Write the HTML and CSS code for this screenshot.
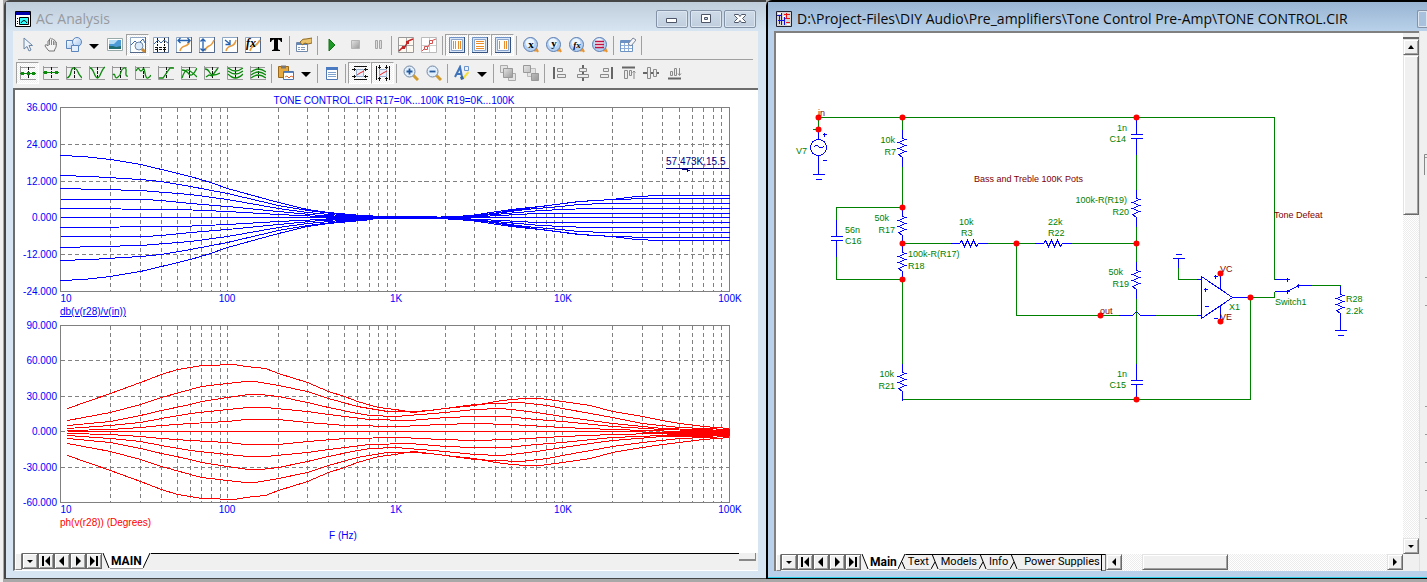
FILE: index.html
```html
<!DOCTYPE html>
<html lang="en">
<head>
<meta charset="utf-8">
<title>AC Analysis</title>
<link rel="stylesheet" href="styles.css">
</head>
<body>
<svg class="sprite" aria-hidden="true">
  <defs>
    <linearGradient id="gb" x1="0" y1="0" x2="1" y2="1"><stop offset="0" stop-color="#fff"/><stop offset="1" stop-color="#9fc3ee"/></linearGradient>
    <linearGradient id="gg" x1="0" y1="0" x2="1" y2="1"><stop offset="0" stop-color="#e4e4e4"/><stop offset="1" stop-color="#999"/></linearGradient>
    <symbol id="i-cursor" viewBox="0 0 16 16"><path d="M4 1v11l3-2.500 2 4.500 2-1-2-4.500h3.500z" fill="#eef4fb" stroke="#6b84a5"/></symbol>
    <symbol id="i-hand" viewBox="0 0 16 16"><path d="M5 13 2 9q0-2 2-1l1 1V4q1-1 1.500 0V2q1-1.500 2 0 1-1 2 1 1.500-.500 1.500 1.500 1.500 0 1.500 2 0 4-2 6.500v1H6z" fill="#f4f4f4" stroke="#777"/><path d="M6.500 4v4M8.500 3v5M10.500 4v4M12 5v3" stroke="#888" fill="none"/></symbol>
    <symbol id="i-shapes" viewBox="0 0 16 16"><path d="M.5 3.500h9v8h-9z" fill="url(#gb)" stroke="#5b85bd"/><circle cx="11" cy="5" r="4.500" fill="url(#gb)" stroke="#5b85bd"/><path d="M5.500 8.500h7v6h-7z" fill="#e4effb" stroke="#5b85bd"/></symbol>
    <symbol id="i-drop" viewBox="0 0 10 16"><path d="M0 7h10L5 12z" fill="#000"/></symbol>
    <symbol id="i-picture" viewBox="0 0 16 16"><path d="M.5 1.500h15v12H.5z" fill="#fff" stroke="#9aa"/><path d="M2 3h12v9H2z" fill="#4d9bd6"/><path d="M2 3h9l-4 4H2z" fill="#b4dcf4"/><path d="M2 12V9l4 0 3 1 5-1v3z" fill="#1f6d70"/></symbol>
    <symbol id="i-box" viewBox="0 0 16 16"><path d="M.5.5h15v15H.5z" fill="#fdfefe" stroke="#8fa6c5"/><path d="M0 15.500h15.500V0" fill="none" stroke="#54688a"/></symbol>
    <symbol id="i-scope" viewBox="0 0 16 16"><use href="#i-box"/><path d="M1 8l4-4 3 3 5-5 2 4" fill="none" stroke="#3b67a8"/><circle cx="9" cy="9" r="4" fill="#dcecfb" stroke="#7088a8"/><path d="M12 12l3 3" stroke="#c98b35" stroke-width="3"/></symbol>
    <symbol id="i-cursors" viewBox="0 0 16 16"><use href="#i-box"/><path d="M4.500 1v14M11.500 1v14" stroke="#111" stroke-dasharray="2 1"/><path d="M1 7l4-4 3 3 3-3 4 3" fill="none" stroke="#3b67a8"/><path d="M2 10.500h12M2 12.500h12" stroke="#111" stroke-dasharray="3 1"/></symbol>
    <symbol id="i-fitw" viewBox="0 0 16 16"><use href="#i-box"/><path d="M4 14q1-4 5-5t5-6" fill="none" stroke="#e89a3c" stroke-width="1.500"/><path d="M2 3.500h12M4.500 1 2 3.500 4.500 6M11.500 1 14 3.500 11.500 6" fill="none" stroke="#2460b0" stroke-width="1.300"/></symbol>
    <symbol id="i-fith" viewBox="0 0 16 16"><use href="#i-box"/><path d="M6 14q1-4 4-5t5-6" fill="none" stroke="#e89a3c" stroke-width="1.500"/><path d="M4 2v12M1.500 4.500 4 2l2.500 2.500M1.500 11.500 4 14l2.500-2.500" fill="none" stroke="#2460b0" stroke-width="1.300"/></symbol>
    <symbol id="i-topoint" viewBox="0 0 16 16"><use href="#i-box"/><path d="M4 14q1-4 5-5t5-6" fill="none" stroke="#e89a3c" stroke-width="1.500"/><path d="M3 3l5 4M8 3v4.500H3.500" fill="none" stroke="#2460b0" stroke-width="1.300"/></symbol>
    <symbol id="i-fx" viewBox="0 0 16 16"><use href="#i-box"/><path d="M5 14q1-4 4-5t6-6" fill="none" stroke="#e89a3c" stroke-width="1.500"/><text x="1" y="10" class="g-fx">fx</text></symbol>
    <symbol id="i-text" viewBox="0 0 16 16"><path d="M2 1h12v4h-1q-.5-2.500-3-2.500v9q0 1.500 2 1.500v1H4v-1q2 0 2-1.500v-9Q3.500 2.500 3 5H2z" fill="#000"/></symbol>
    <symbol id="i-props" viewBox="0 0 16 16"><path d="M.5 5.500h11v9H.5z" fill="#fff" stroke="#7088ab"/><path d="M1 6h10v2H1z" fill="#5e86bd"/><path d="M2 10.500h2m1 0h4M2 12.500h2m1 0h4" stroke="#819ab9"/><path d="M4 5q3-4 6-3l6-1v5l-4 1-3-1-3 2z" fill="#eac36c" stroke="#906b27"/></symbol>
    <symbol id="i-play" viewBox="0 0 16 16"><path d="M5 2v12l6-6z" fill="#1d9a26" stroke="#157019"/></symbol>
    <symbol id="i-stop" viewBox="0 0 16 16"><path d="M4.500 3.500h8v8h-8z" fill="url(#gg)" stroke="#b4b4b4"/></symbol>
    <symbol id="i-pause" viewBox="0 0 16 16"><path d="M5.500 3.500h2v8h-2zM9.500 3.500h2v8h-2z" fill="#ddd" stroke="#a5a5a5"/></symbol>
    <symbol id="i-pts" viewBox="0 0 16 16"><path d="M.5.5h15v15H.5z" fill="#fdf8f0" stroke="#999"/><path d="M1 8.500h14M8.500 1v14" stroke="#aaa"/><path d="M1 14l4-4h2l3-6 5-2" fill="none" stroke="#c02626" stroke-width="1.500"/><path d="M4 9h3v3H4zM8 4h3v3H8z" fill="#c02626"/></symbol>
    <symbol id="i-pts2" viewBox="0 0 16 16"><path d="M.5.5h15v15H.5z" fill="#fff" stroke="#bbb"/><path d="M1 8.500h14M8.500 1v14" stroke="#ccc"/><path d="M1 14l4-4h2l3-6 5-2" fill="none" stroke="#d45151"/><path d="M3.500 9.500h3v3h-3zM8.500 3.500h3v3h-3z" fill="#fff" stroke="#d45151"/></symbol>
    <symbol id="i-frame" viewBox="0 0 16 16"><path d="M.5.5h15v15H.5z" fill="#d9e6f7" stroke="#6f93c6"/><path d="M2.500 2.500h11v11h-11z" fill="#fffdf8" stroke="#8aa4cc"/><path d="M0 15.500h15.500V0" fill="none" stroke="#34517f"/></symbol>
    <symbol id="i-vlines" viewBox="0 0 16 16"><use href="#i-frame"/><path d="M4.500 4v8M6.500 4v8M9.500 4v8M11.500 4v8" stroke="#e98c2c"/></symbol>
    <symbol id="i-hlines" viewBox="0 0 16 16"><use href="#i-frame"/><path d="M4 4.500h8M4 6.500h8M4 9.500h8M4 11.500h8" stroke="#e98c2c"/></symbol>
    <symbol id="i-vlines2" viewBox="0 0 16 16"><use href="#i-frame"/><path d="M4.500 4v8M9.500 4v8M11.500 4v8" stroke="#e98c2c"/></symbol>
    <symbol id="i-lens" viewBox="0 0 16 16"><path d="M11 13.500h4M13 11l2 4" stroke="#e89531" stroke-width="2"/><circle cx="7.500" cy="7.500" r="7" fill="#b4d0f2" stroke="#5c7eb0"/><circle cx="7" cy="6" r="4.500" fill="#edf5fd"/></symbol>
    <symbol id="i-lx" viewBox="0 0 16 16"><use href="#i-lens"/><text x="8" y="11" class="g-let">x</text></symbol>
    <symbol id="i-ly" viewBox="0 0 16 16"><use href="#i-lens"/><text x="8" y="10" class="g-let">y</text></symbol>
    <symbol id="i-lf" viewBox="0 0 16 16"><use href="#i-lens"/><text x="8" y="11" class="g-let g-let--s">fx</text></symbol>
    <symbol id="i-lr" viewBox="0 0 16 16"><use href="#i-lens"/><path d="M3 4.500h9M3 7.500h9M3 10.500h9" stroke="#c31240" stroke-width="1.500"/></symbol>
    <symbol id="i-table" viewBox="0 0 16 16"><path d="M.5 3.500h12v11H.5z" fill="#fff" stroke="#6d92c4"/><path d="M1 4h11v2H1z" fill="#6d92c4"/><path d="M1 8.500h11M1 11.500h11M4.500 6v8M8.500 6v8" stroke="#8fb0da"/><path d="M8 7l5-6 3 2-5 6z" fill="#f3f5f8" stroke="#7b8699"/></symbol>
    <symbol id="i-ax" viewBox="0 0 16 16"><path d="M.5 1v13.500H16M.5 2.500H15" fill="none" stroke="#999"/><path d="M8.500 2v12" stroke="#111" stroke-dasharray="3 1"/></symbol>
    <symbol id="w1" viewBox="0 0 16 16"><use href="#i-ax"/><path d="M0 8.500h16" stroke="#0b8a0b"/><path d="M1 7h3v3H1zM12 7h3v3h-3zM7 7h3v3H7z" fill="#0b8a0b"/></symbol>
    <symbol id="w2" viewBox="0 0 16 16"><use href="#i-ax"/><path d="M0 7.500h16" stroke="#0b8a0b"/><path d="M1 6h3v3H1zM12 6h3v3h-3z" fill="#0b8a0b"/></symbol>
    <symbol id="w3" viewBox="0 0 16 16"><use href="#i-ax"/><path d="M1 13q3-1 4-6t3.500-4T12 7t4 6" class="gc"/></symbol>
    <symbol id="w4" viewBox="0 0 16 16"><use href="#i-ax"/><path d="M1 3q2 0 4 5t3.500 5T12 8t4-6" class="gc"/></symbol>
    <symbol id="w5" viewBox="0 0 16 16"><use href="#i-ax"/><path d="M1 10q1.500-2 2 1t3 1 3-5 3-4 2 4 2 4" class="gc"/></symbol>
    <symbol id="w6" viewBox="0 0 16 16"><use href="#i-ax"/><path d="M1 6q2-4 3-2t2 2 2-2 2 4 3 5 3-3" class="gc"/></symbol>
    <symbol id="w7" viewBox="0 0 16 16"><use href="#i-ax"/><path d="M1 13h4l7-10h4" class="gc"/></symbol>
    <symbol id="w8" viewBox="0 0 16 16"><use href="#i-ax"/><path d="M1 13q3-9 6-8t9 7M1 5q4 0 7 4t8-6" class="gc"/></symbol>
    <symbol id="w9" viewBox="0 0 16 16"><use href="#i-ax"/><path d="M1 4q3 0 5 4t10 0M2 12l3-2 3 1 6-8" class="gc"/></symbol>
    <symbol id="w10" viewBox="0 0 16 16"><use href="#i-ax"/><path d="M1 3q4 3 7.500 3T16 3M1 6q4 3 7.500 3T16 6M1 9q4 4 7.500 4T16 9" class="gc"/></symbol>
    <symbol id="w11" viewBox="0 0 16 16"><use href="#i-ax"/><path d="M1 7q4-3 7.500-3T16 7M1 10q4-3 7.500-3T16 10M1 13q4-3 7.500-3T16 13" class="gc"/></symbol>
    <symbol id="i-paste" viewBox="0 0 16 16"><path d="M.5 1.500h10v11H.5z" fill="#e5a93f" stroke="#99681d"/><path d="M3 .5h5v3H3z" fill="#777"/><path d="M5.500 6.500h10v8h-10z" fill="#fff" stroke="#4d75ad"/><path d="M6 7h9v1H6z" fill="#5e86bd"/><path d="M7 12l2-1 2 2 2-2 2 1" fill="none" stroke="#e0682c"/></symbol>
    <symbol id="i-list" viewBox="0 0 16 16"><path d="M2.500 2.500h11v12h-11z" fill="#fff" stroke="#5079b5"/><path d="M2 2h12v3H2z" fill="#4a7ac2"/><path d="M4 7.500h8M4 9.500h8M4 11.500h8" stroke="#7fa1cc"/></symbol>
    <symbol id="i-bh" viewBox="0 0 16 16"><path d="M2 1.500h13M2 14.500h13" stroke="#111"/><path d="M4.500 4.500h7v7h-7z" fill="#e6effb" stroke="#9ab0cf"/><path d="M5 10l3-2 4-2" stroke="#e22" fill="none"/><path d="M0 4.500h4M2.500 3v3M12 4.500h4M13.500 3v3M0 11.500h4M2.500 10v3M12 11.500h4M13.500 10v3" stroke="#111"/></symbol>
    <symbol id="i-bv" viewBox="0 0 16 16"><path d="M1.500 1v14M14.500 1v14" stroke="#111"/><path d="M4.500 4.500h7v7h-7z" fill="#e6effb" stroke="#9ab0cf"/><path d="M5 10l3-2 4-2" stroke="#e22" fill="none"/><path d="M4.500 0v4M3 2.500h3M11.500 0v4M10 2.500h3M4.500 12v4M3 13.500h3M11.500 12v4M10 13.500h3" stroke="#111"/></symbol>
    <symbol id="i-zin" viewBox="0 0 16 16"><path d="M10 10l5 5" stroke="#d09a2c" stroke-width="3"/><circle cx="6.500" cy="6.500" r="5.500" fill="#e1effd" stroke="#7386a0"/><path d="M3.500 6.500h6M6.500 3.500v6" stroke="#245a9c" stroke-width="1.800"/></symbol>
    <symbol id="i-zout" viewBox="0 0 16 16"><path d="M10 10l5 5" stroke="#d09a2c" stroke-width="3"/><circle cx="6.500" cy="6.500" r="5.500" fill="#e1effd" stroke="#7386a0"/><path d="M3.500 6.500h6" stroke="#245a9c" stroke-width="1.800"/></symbol>
    <symbol id="i-font" viewBox="0 0 16 16"><path d="M1 12 6 2l2 10M3 9h5" fill="none" stroke="#3f74bd" stroke-width="2"/><path d="M10.500 1.500h4v4h-4z" fill="none" stroke="#6b95cf"/><path d="M8 13l6-7 1 2-5 6z" fill="#f5e03c"/><path d="M6 12l3-1 1 3-3 1z" fill="#33659f"/></symbol>
    <symbol id="i-front" viewBox="0 0 16 16"><path d="M.5.5h7v7h-7zM8.500 8.500h7v7h-7z" fill="#e4e4e4" stroke="#aaa"/><path d="M3.500 3.500h9v9h-9z" fill="url(#gg)" stroke="#999"/></symbol>
    <symbol id="i-back" viewBox="0 0 16 16"><path d="M4.500 3.500h8v8h-8z" fill="#e4e4e4" stroke="#bbb"/><path d="M.5.5h7v7h-7zM8.500 8.500h7v7h-7z" fill="url(#gg)" stroke="#999"/></symbol>
    <symbol id="a1" viewBox="0 0 16 16"><path d="M3 2v12" stroke="#666" stroke-width="2"/><path d="M6.500 3.500h5v3h-5zM6.500 9.500h8v3h-8z" class="al"/></symbol>
    <symbol id="a2" viewBox="0 0 16 16"><path d="M9 0v3M9 7v2M9 13v3" stroke="#666" stroke-width="2"/><path d="M5.500 3.500h7v3h-7zM3.500 9.500h11v3h-11z" class="al"/></symbol>
    <symbol id="a3" viewBox="0 0 16 16"><path d="M15 2v12" stroke="#666" stroke-width="2"/><path d="M6.500 3.500h5v3h-5zM3.500 9.500h8v3h-8z" class="al"/></symbol>
    <symbol id="a4" viewBox="0 0 16 16"><path d="M2 2.500h13" stroke="#666" stroke-width="2"/><path d="M4.500 5.500h3v8h-3zM9.500 5.500h2v5h-2zM14 6v8M12.500 7.500 14 6l1.500 1.500" class="al"/></symbol>
    <symbol id="a5" viewBox="0 0 16 16"><path d="M0 8h4M8 8h2M14 8h2" stroke="#666" stroke-width="2"/><path d="M4.500 2.500h3v11h-3zM10.500 4.500h3v7h-3z" class="al"/></symbol>
    <symbol id="a6" viewBox="0 0 16 16"><path d="M2 13.500h13" stroke="#666" stroke-width="2"/><path d="M4.500 6.500h2v4h-2zM8.500 3.500h2v7h-2zM13.500 3v7M12 8.500l1.500 2 1.500-2" class="al"/></symbol>
    <symbol id="n-drop" viewBox="0 0 10 10"><path d="M2 4h6L5 7z"/></symbol>
    <symbol id="n-first" viewBox="0 0 10 10"><path d="M1 0h2v10H1zM9 0v10L4 5z"/></symbol>
    <symbol id="n-prev" viewBox="0 0 10 10"><path d="M7 0v10L2 5z"/></symbol>
    <symbol id="n-next" viewBox="0 0 10 10"><path d="M3 0v10l5-5z"/></symbol>
    <symbol id="n-last" viewBox="0 0 10 10"><path d="M7 0h2v10H7zM1 0v10l5-5z"/></symbol>
    <symbol id="n-up" viewBox="0 0 10 10"><path d="M2 7h6L5 3z"/></symbol>
    <symbol id="n-left" viewBox="0 0 10 10"><path d="M7 1v8L3 5z"/></symbol>
    <symbol id="n-right" viewBox="0 0 10 10"><path d="M3 1v8l4-4z"/></symbol>
  </defs>
</svg>

<main class="desk">
<section class="win win--analysis">
  <header class="title">
    <svg class="title__icon" viewBox="0 0 16 16"><path d="M.5.5h15v15H.5z" fill="#fff" stroke="#000"/><path d="M1 1h14v3H1z" fill="#00a"/><path d="M4.500 6.500h9v7h-9z" fill="#3ff" stroke="#000"/><path d="M6 12q3-5 6 0" fill="none" stroke="#000"/><path d="M2 7.500h1M2 10.500h1M2 12.500h1" stroke="#000"/></svg>
    <h1 class="title__text">AC Analysis</h1>
    <div class="title__controls">
      <button class="ctl" aria-label="Minimize"><svg viewBox="0 0 16 12"><path d="M2.500 5.500h10v4h-10z" fill="#fff" stroke="#4d5666"/></svg></button>
      <button class="ctl" aria-label="Restore"><svg viewBox="0 0 16 12"><path d="M3.500 1.500h9v8h-9z" fill="#fff" stroke="#4d5666"/><path d="M6.500 4.500h3v2h-3z" fill="#c9d6e5" stroke="#4d5666"/></svg></button>
      <button class="ctl" aria-label="Close"><svg viewBox="0 0 16 12"><path d="M2.500 1.500h4L8 3.500l1.500-2h4v1L10.500 5.500l3 3v1h-4L8 7.500l-1.500 2h-4v-1l3-3-3-3z" fill="#fff" stroke="#4d5666"/></svg></button>
    </div>
  </header>

  <div class="tools">
    <div class="row">
      <button class="tb" aria-label="Select"><svg><use href="#i-cursor"/></svg></button>
      <button class="tb" aria-label="Pan"><svg><use href="#i-hand"/></svg></button>
      <button class="tb" aria-label="Shapes"><svg><use href="#i-shapes"/></svg></button>
      <button class="tb tb--drop" aria-label="More shapes"><svg><use href="#i-drop"/></svg></button>
      <button class="tb" aria-label="Picture"><svg><use href="#i-picture"/></svg></button>
      <button class="tb tb--on" aria-label="Scale"><svg><use href="#i-scope"/></svg></button>
      <button class="tb" aria-label="Cursor mode"><svg><use href="#i-cursors"/></svg></button>
      <button class="tb" aria-label="Horizontal tag"><svg><use href="#i-fitw"/></svg></button>
      <button class="tb" aria-label="Vertical tag"><svg><use href="#i-fith"/></svg></button>
      <button class="tb" aria-label="Point tag"><svg><use href="#i-topoint"/></svg></button>
      <button class="tb" aria-label="Performance tag"><svg><use href="#i-fx"/></svg></button>
      <button class="tb" aria-label="Text"><svg><use href="#i-text"/></svg></button>
      <span class="sep"></span>
      <button class="tb" aria-label="Properties"><svg><use href="#i-props"/></svg></button>
      <span class="sep"></span>
      <button class="tb" aria-label="Run"><svg><use href="#i-play"/></svg></button>
      <button class="tb" aria-label="Stop"><svg><use href="#i-stop"/></svg></button>
      <button class="tb" aria-label="Pause"><svg><use href="#i-pause"/></svg></button>
      <span class="sep"></span>
      <button class="tb" aria-label="Data points"><svg><use href="#i-pts"/></svg></button>
      <button class="tb" aria-label="Tokens"><svg><use href="#i-pts2"/></svg></button>
      <span class="sep"></span>
      <button class="tb tb--on" aria-label="X grids"><svg><use href="#i-vlines"/></svg></button>
      <button class="tb tb--on" aria-label="Y grids"><svg><use href="#i-hlines"/></svg></button>
      <button class="tb tb--on" aria-label="Minor log grids"><svg><use href="#i-vlines2"/></svg></button>
      <span class="sep"></span>
      <button class="tb" aria-label="Go to X"><svg><use href="#i-lx"/></svg></button>
      <button class="tb" aria-label="Go to Y"><svg><use href="#i-ly"/></svg></button>
      <button class="tb" aria-label="Go to performance"><svg><use href="#i-lf"/></svg></button>
      <button class="tb" aria-label="Go to branch"><svg><use href="#i-lr"/></svg></button>
      <span class="sep"></span>
      <button class="tb" aria-label="Clear table"><svg><use href="#i-table"/></svg></button>
      <span class="sep"></span>
    </div>
    <div class="rule"></div>
    <div class="row">
      <button class="tb tb--on" aria-label="Next data point"><svg><use href="#w1"/></svg></button>
      <button class="tb" aria-label="Next simulation point"><svg><use href="#w2"/></svg></button>
      <button class="tb" aria-label="Peak"><svg><use href="#w3"/></svg></button>
      <button class="tb" aria-label="Valley"><svg><use href="#w4"/></svg></button>
      <button class="tb" aria-label="High"><svg><use href="#w5"/></svg></button>
      <button class="tb" aria-label="Low"><svg><use href="#w6"/></svg></button>
      <button class="tb" aria-label="Inflection"><svg><use href="#w7"/></svg></button>
      <button class="tb" aria-label="Global high"><svg><use href="#w8"/></svg></button>
      <button class="tb" aria-label="Global low"><svg><use href="#w9"/></svg></button>
      <button class="tb" aria-label="Bottom"><svg><use href="#w10"/></svg></button>
      <button class="tb" aria-label="Top"><svg><use href="#w11"/></svg></button>
      <span class="sep"></span>
      <button class="tb" aria-label="Clipboard"><svg><use href="#i-paste"/></svg></button>
      <button class="tb tb--drop" aria-label="Clipboard options"><svg><use href="#i-drop"/></svg></button>
      <span class="sep"></span>
      <button class="tb" aria-label="Numeric output"><svg><use href="#i-list"/></svg></button>
      <span class="sep"></span>
      <button class="tb tb--on" aria-label="Same Y scales"><svg><use href="#i-bh"/></svg></button>
      <button class="tb tb--on" aria-label="Same X scales"><svg><use href="#i-bv"/></svg></button>
      <span class="sep"></span>
      <button class="tb" aria-label="Zoom in"><svg><use href="#i-zin"/></svg></button>
      <button class="tb" aria-label="Zoom out"><svg><use href="#i-zout"/></svg></button>
      <span class="sep"></span>
      <button class="tb" aria-label="Font"><svg><use href="#i-font"/></svg></button>
      <button class="tb tb--drop" aria-label="Font options"><svg><use href="#i-drop"/></svg></button>
      <span class="sep"></span>
      <button class="tb" aria-label="Bring to front"><svg><use href="#i-front"/></svg></button>
      <button class="tb" aria-label="Send to back"><svg><use href="#i-back"/></svg></button>
      <span class="sep"></span>
      <button class="tb" aria-label="Align left"><svg><use href="#a1"/></svg></button>
      <button class="tb" aria-label="Align center"><svg><use href="#a2"/></svg></button>
      <button class="tb" aria-label="Align right"><svg><use href="#a3"/></svg></button>
      <button class="tb" aria-label="Align top"><svg><use href="#a4"/></svg></button>
      <button class="tb" aria-label="Align middle"><svg><use href="#a5"/></svg></button>
      <button class="tb" aria-label="Align bottom"><svg><use href="#a6"/></svg></button>
    </div>
  </div>

  <div class="plot">
    <svg class="plot__svg" viewBox="15 90 743 463" preserveAspectRatio="xMinYMin meet" role="img" aria-label="Gain and phase plots">
      <defs>
        <clipPath id="clipTop"><path d="M60 107H730V292H60z"/></clipPath>
        <g id="gain">
          <path d="M60 155 83 156 110 159 140 164 161 169 190 176 210 182 227 188 278 202 307 209 328 212 350 214 372 216"/>
          <path d="M60 175 90 176 140 179 161 181 190 186 227 193 278 205 307 210 340 214 372 216"/>
          <path d="M60 188 100 189 140 190 190 194 227 199 278 208 307 212 340 215 372 217"/>
          <path d="M60 199H144L161 200 190 203 227 206 278 211 320 215 372 217"/>
          <path d="M60 208 180 209 227 211 278 214 320 216 372 217"/>
          <path d="M440 217 470 215 511 209 548 205 578 201 612 199 635 196 660 195H729"/>
          <path d="M440 217 474 216 511 210 548 205 580 201 612 199 650 198H729"/>
          <path d="M445 217 495 213 525 209 560 206 578 204 606 203H729"/>
          <path d="M450 217 495 214 540 210 587 208H729"/>
          <path d="M460 217 500 215 536 213H729"/>
        </g>
        <g id="phase">
          <path d="M67 408 110 393 140 382 161 374 177 369 190 367 201 365H217L222 364H234L245 366 265 368 278 373 307 382 328 391 344 396 357 401 378 407 395 409 413 412 445 408 474 405 495 401 511 399 525 398H540L562 401 590 405 612 411"/>
          <path d="M67 420 110 412 140 404 161 397 190 389 201 386 227 383 245 381H255L278 385 307 391 328 398 357 406 387 411H413L430 410 474 404 495 403 520 402 547 405 562 408 590 413 612 417"/>
          <path d="M67 425 110 421 140 415 161 410 190 404 201 401 227 397 248 394H260L278 396 307 402 328 407 357 413 370 415 395 416 420 414 445 412 474 409 500 408 511 409 536 412 562 416 590 420 612 423"/>
          <path d="M67 428 110 425 140 422 161 418 190 413 227 409 248 407H265L307 411 328 414 369 419 410 420 445 417 474 416H505L536 419 562 421 612 426"/>
          <path d="M67 430 110 429 140 427 161 425 190 423 227 421 245 419H278L307 422 345 425 400 426 440 424 474 423 510 424 562 427 612 429"/>
        </g>
      </defs>
      <g class="grid" transform="translate(.5 .5)">
        <g class="grid__dash">
          <path d="M110 107V291M140 107V291M161 107V291M177 107V291M190 107V291M201 107V291M211 107V291M220 107V291M227 107V291M278 107V291M307 107V291M328 107V291M344 107V291M357 107V291M369 107V291M378 107V291M387 107V291M395 107V291M445 107V291M474 107V291M495 107V291M511 107V291M525 107V291M536 107V291M546 107V291M554 107V291M562 107V291M612 107V291M642 107V291M662 107V291M679 107V291M692 107V291M703 107V291M713 107V291M721 107V291"/>
          <path d="M110 325V502M140 325V502M161 325V502M177 325V502M190 325V502M201 325V502M211 325V502M220 325V502M227 325V502M278 325V502M307 325V502M328 325V502M344 325V502M357 325V502M369 325V502M378 325V502M387 325V502M395 325V502M445 325V502M474 325V502M495 325V502M511 325V502M525 325V502M536 325V502M546 325V502M554 325V502M562 325V502M612 325V502M642 325V502M662 325V502M679 325V502M692 325V502M703 325V502M713 325V502M721 325V502"/>
          <path d="M60 144H729M60 181H729M60 254H729M60 360H729M60 396H729M60 431H729M60 467H729"/>
        </g>
        <path d="M60 107H729V291H60zM60 325H729V502H60z"/>
      </g>
      <g class="trace trace--blue" transform="translate(.5 .5)">
        <use href="#gain"/><use href="#gain" transform="matrix(1 0 0 -1 0 435)"/>
        <path d="M60 217H729"/>
        <path d="M340 215H372M340 219H372M362 217H445M350 216H436M350 218H460M320 217H480M325 216H372M325 218H372M440 216H465"/>
      </g>
      <g class="trace trace--red" transform="translate(.5 .5)">
        <use href="#phase"/><use href="#phase" transform="matrix(1 0 0 -1 0 863)"/>
        <path d="M67 431H624L660 432 729 433"/>
        <path d="M612 411 642 416 662 420 679 423 703 426 729 428M612 417 642 423 679 427 729 429M612 423 662 428 729 430M612 426 662 429 729 431M612 429 680 431 729 432"/>
        <path d="M612 452 642 447 662 444 703 439 729 437M612 446 642 442 679 438 729 436M612 440 662 436 729 435M612 437 662 435 729 434M612 434 660 433 729 433"/>
        <path class="trace__fill" d="M675 431 729 429V435L696 436 660 433z"/>
      </g>
      <g class="lbl">
        <text class="mid" x="394" y="104">TONE CONTROL.CIR R17=0K...100K R19=0K...100K</text>
        <g class="end">
          <text x="57" y="111">36.000</text><text x="57" y="148">24.000</text><text x="57" y="185">12.000</text><text x="57" y="221">0.000</text><text x="57" y="258">-12.000</text><text x="57" y="295">-24.000</text>
          <text x="57" y="329">90.000</text><text x="57" y="364">60.000</text><text x="57" y="400">30.000</text><text x="57" y="435">0.000</text><text x="57" y="471">-30.000</text><text x="57" y="506">-60.000</text>
        </g>
        <g class="mid">
          <text x="66" y="302">10</text><text x="227" y="302">100</text><text x="396" y="302">1K</text><text x="563" y="302">10K</text><text x="730" y="302">100K</text>
          <text x="66" y="513">10</text><text x="227" y="513">100</text><text x="396" y="513">1K</text><text x="563" y="513">10K</text><text x="730" y="513">100K</text>
          <text x="343" y="539">F (Hz)</text>
        </g>
        <text class="under" x="60" y="315">db(v(r28)/v(in))</text>
        <text class="red" x="60" y="526">ph(v(r28)) (Degrees)</text>
        <g clip-path="url(#clipTop)"><text class="navy" x="666" y="165">57.473K,15.5</text></g>
      </g>
      <path class="callout" d="M666 168.500H729M682 169.500h6M687 170.500h3M687.500 169v3"/>
    </svg>
  </div>

  <footer class="tabs tabs--analysis">
    <span class="nub"></span>
    <button class="nav" aria-label="Page list"><svg><use href="#n-drop"/></svg></button>
    <button class="nav" aria-label="First page"><svg><use href="#n-first"/></svg></button>
    <button class="nav" aria-label="Previous page"><svg><use href="#n-prev"/></svg></button>
    <button class="nav" aria-label="Next page"><svg><use href="#n-next"/></svg></button>
    <button class="nav" aria-label="Last page"><svg><use href="#n-last"/></svg></button>
    <svg class="edge" viewBox="0 0 8 17"><path class="edge__w" d="M0 0H8V16z"/><path d="M1 0 7 15"/></svg>
    <button class="tab tab--on">MAIN</button>
    <svg class="edge" viewBox="0 0 8 17"><path class="edge__w" d="M0 0H7L0 16z"/><path d="M0 15 7 0"/></svg>
    <span class="fillbar"></span>
    <span class="grip"></span>
  </footer>
</section>

<section class="win win--circuit">
  <header class="title title--active">
    <svg class="title__icon" viewBox="0 0 16 16"><path d="M.5.5h15v15H.5z" fill="#d5d5d5" stroke="#223"/><path d="M1 4.500h5M5.500 2v12M2 9.500h6M8.500 6v8M3.500 5v8" fill="none" stroke="#11d"/><path d="M8 3.500h6M9 7.500h5M10 11.500h4M10.500 2v5" stroke="#e11"/><path d="M7 5.500h2M11 13.500h3M2 2.500h3" stroke="#fff"/></svg>
    <h2 class="title__text">D:\Project-Files\DIY Audio\Pre_amplifiers\Tone Control Pre-Amp\TONE CONTROL.CIR</h2>
    <button class="ctl ctl--cut" aria-label="Minimize"></button>
  </header>
  <div class="doc">
    <div class="doc__main">
      <div class="sheet">
        <svg class="plot__svg" viewBox="776 33 627 521" preserveAspectRatio="xMinYMin meet" role="img" aria-label="Tone control circuit">
          <defs>
            <path id="rv" d="M0 0V9L3 10-4 13 3 16-4 19 3 22-4 25 0 28V37"/>
            <path id="rh" d="M0 0H9L11-3 14 3 17-3 20 3 23-3 26 3 28 0H37"/>
            <path id="cap" d="M0 0V17M-6 17H6M-6 21H6M0 21V37"/>
            <path id="plus" d="M-2 0H2M0-2V2"/>
          </defs>
          <g class="wire" transform="translate(.5 .5)">
            <path d="M818 129V117H1274V279M812 129H818M902 117V129M902 166V207H836V219M836 256V279H902V363M902 243H950M987 243H1034M1071 243H1136M1016 243V315H1118M1155 315H1196M902 399H1250V297H1274V291M1136 154V189M1136 226V261M1136 297V363M1178 267V279H1196M1311 285H1340"/>
          </g>
          <g class="part" transform="translate(.5 .5)">
            <path d="M818 129V138M818 155V174M812 174H824M815 179H821M813 147q3-4 5-1t5 0"/><circle cx="818" cy="147" r="8"/>
            <path d="M822 160h4M1196 279H1201M1118 315H1132L1136 311 1140 315H1155M1196 315H1201"/>
            <use href="#rv" x="902" y="129"/><use href="#rv" x="902" y="207"/><use href="#rv" x="902" y="243"/><use href="#rv" x="902" y="363"/>
            <use href="#rv" x="1136" y="189"/><use href="#rv" x="1136" y="261"/><use href="#rv" x="1340" y="285"/>
            <use href="#rh" x="950" y="243"/><use href="#rh" x="1034" y="243"/>
            <use href="#cap" x="836" y="219"/><use href="#cap" x="1136" y="117"/><use href="#cap" x="1136" y="363"/>
            <path d="M1340 321V330M1334 330H1346M1337 335H1343M1175 254H1181M1172 258H1184M1178 258V267"/>
            <path d="M1201 276V318L1232 297zM1232 297H1250M1220 273V289M1220 305V321M1204 306h4M1213 318h4"/>
            <path d="M1274 279H1287M1274 291H1287L1298 285H1311"/>
            <use href="#plus" x="824" y="134"/><use href="#plus" x="1205" y="289"/><use href="#plus" x="1215" y="276"/><use href="#plus" x="1287" y="279"/><use href="#plus" x="1287" y="291"/><use href="#plus" x="1298" y="285"/>
          </g>
          <path class="dots" d="M818 117h0M818 129h0M902 117h0M1136 117h0M902 207h0M902 243h0M902 279h0M1016 243h0M1136 243h0M1100 315h0M1136 399h0M1250 297h0M1220 273h0M1220 321h0" transform="translate(.5 .5)"/>
          <g class="note">
            <text class="maroon" x="818" y="116">in</text>
            <text x="796" y="154">V7</text>
            <g class="end">
              <text x="895" y="143">10k</text><text x="896" y="155">R7</text>
              <text x="889" y="221">50k</text><text x="895" y="233">R17</text>
              <text x="894" y="377">10k</text><text x="895" y="389">R21</text>
              <text x="1127" y="131">1n</text><text x="1126" y="142">C14</text>
              <text x="1127" y="203">100k-R(R19)</text><text x="1129" y="215">R20</text>
              <text x="1123" y="275">50k</text><text x="1129" y="287">R19</text>
              <text x="1127" y="377">1n</text><text x="1126" y="388">C15</text>
            </g>
            <text x="845" y="233">56n</text><text x="845" y="244">C16</text>
            <text x="908" y="257">100k-R(R17)</text><text x="908" y="269">R18</text>
            <text x="959" y="225">10k</text><text x="961" y="236">R3</text>
            <text x="1048" y="225">22k</text><text x="1048" y="236">R22</text>
            <text x="1229" y="310">X1</text><text x="1275" y="305">Switch1</text>
            <text x="1346" y="302">R28</text><text x="1346" y="314">2.2k</text>
            <g class="maroon">
              <text x="974" y="182">Bass and Treble 100K Pots</text>
              <text x="1274" y="218">Tone Defeat</text>
              <text x="1220" y="272">VC</text><text x="1220" y="320">VE</text><text x="1100" y="314">out</text>
            </g>
          </g>
        </svg>
      </div>
      <div class="vbar">
        <span class="split"></span>
        <button class="sb" aria-label="Scroll up"><svg><use href="#n-up"/></svg></button>
        <span class="thumb thumb--v"></span>
        <span class="trough"></span>
        <button class="sb" aria-label="Scroll down"><svg><use href="#n-drop"/></svg></button>
      </div>
      <footer class="tabs">
        <span class="nub"></span>
        <button class="nav" aria-label="Page list"><svg><use href="#n-drop"/></svg></button>
        <button class="nav" aria-label="First page"><svg><use href="#n-first"/></svg></button>
        <button class="nav" aria-label="Previous page"><svg><use href="#n-prev"/></svg></button>
        <button class="nav" aria-label="Next page"><svg><use href="#n-next"/></svg></button>
        <button class="nav" aria-label="Last page"><svg><use href="#n-last"/></svg></button>
        <svg class="edge" viewBox="0 0 8 17"><path class="edge__w" d="M0 0H8V16z"/><path d="M1 0 7 15"/></svg>
        <button class="tab tab--on">Main</button>
        <svg class="edge" viewBox="0 0 8 17"><path class="edge__w" d="M0 0H7L0 16z"/><path d="M0 15 7 0H8M4 8 7 15"/></svg>
        <button class="tab">Text</button>
        <svg class="edge" viewBox="0 0 8 17"><path d="M0 .5H8M1 0 7 15M0 15 4 8"/></svg>
        <button class="tab">Models</button>
        <svg class="edge" viewBox="0 0 8 17"><path d="M0 .5H8M1 0 7 15M0 15 4 8"/></svg>
        <button class="tab">Info</button>
        <svg class="edge" viewBox="0 0 8 17"><path d="M0 .5H8M1 0 7 15M0 15 4 8"/></svg>
        <button class="tab tab--last">Power Supplies</button>
        <span class="nub nub--split"></span>
        <button class="sb" aria-label="Scroll left"><svg><use href="#n-left"/></svg></button>
        <span class="trough trough--lead"></span>
        <span class="thumb thumb--h"></span>
        <span class="trough"></span>
        <button class="sb" aria-label="Scroll right"><svg><use href="#n-right"/></svg></button>
      </footer>
      <span class="corner"></span>
    </div>
    <aside class="side">
      <svg class="side__svg" viewBox="0 0 7 539"><path d="M5 126.500h2M5 246.500h2M5 274.500h2M5 375.500h2M5 403.500h2M5 431.500h2M5 459.500h2M5 487.500h2" stroke="#999"/><path d="M7 123.500H4.500V144" fill="none" stroke="#888"/></svg>
    </aside>
  </div>
</section>
</main>
</body>
</html>
```
FILE: styles.css
```css
* { box-sizing: border-box; }
body {
  margin: 0;
  background: #a0a0a0;
  font-family: "Liberation Sans", Arial, sans-serif;
  font-size: 10px;
  color: #000;
}
h1, h2 { margin: 0; font-weight: 400; }
button { padding: 0; border: 0; background: none; font: inherit; color: inherit; }
svg { display: block; }
.sprite { position: absolute; width: 0; height: 0; }

.desk {
  display: grid;
  grid-template-columns: minmax(0, 762fr) minmax(0, 661fr);
  min-height: 100vh;
  padding: 0 0 3px 4px;
  background: linear-gradient(90deg, #f0f0f0 3px, #a8a8a8 3px);
}
.win { display: flex; flex-direction: column; min-width: 0; }
.win--analysis {
  padding: 0 8px 7px 7px;
  background: #d7e4f2;
  border: solid #454545;
  border-width: 2px 0 1px 2px;
  border-top-left-radius: 6px;
}
.win--circuit {
  padding: 0 0 7px 6px;
  background: #b9d1ea;
  border: solid #000;
  border-width: 2px 0 1px 2px;
  box-shadow: inset 0 -1px 0 #2cd0e8;
  border-top-left-radius: 6px;
}

.title {
  display: flex;
  align-items: center;
  gap: 5px;
  flex: none;
  height: 29px;
  margin: 0 -8px 0 -7px;
  padding: 5px 10px 0 9px;
  background: linear-gradient(#bfcddb, #d7e4f2);
}
.title--active {
  margin: 0 0 0 -6px;
  padding: 5px 0 0 8px;
  background: linear-gradient(#98b4d2, #b9d1ea);
}
.title__icon { width: 16px; height: 16px; flex: none; }
.title__text {
  flex: 1;
  overflow: hidden;
  white-space: nowrap;
  font: 14px/20px "Open Sans", "Noto Sans", sans-serif;
  color: #969a9f;
}
.title--active .title__text { color: #0a0a0a; }
.title__controls { display: flex; gap: 2px; }
.ctl {
  width: 32px;
  height: 18px;
  border: 1px solid #8492a8;
  border-radius: 2px;
  background: linear-gradient(#cfdbe8, #bfcddd);
  box-shadow: inset 0 0 0 1px #dce6f1;
}
.ctl svg { width: 16px; height: 12px; margin: 0 auto; }
.ctl--cut { width: 10px; border-right: 0; border-radius: 2px 0 0 2px; background: #a9c1dc; }

.tools { padding: 3px 0; background: #f0f0f0; }
.row { display: flex; padding-left: 3px; height: 23px; }
.rule { height: 1px; margin: 2px 5px; background: #a0a0a0; }
.tb {
  display: flex;
  align-items: center;
  flex: none;
  width: 23px;
  height: 22px;
  padding-left: 4px;
}
.tb svg { width: 16px; height: 16px; }
.tb--on {
  padding-left: 3px;
  border: 1px solid;
  border-color: #a0a0a0 #fff #fff #a0a0a0;
  background: repeating-conic-gradient(#fff 0 25%, #f0f0f0 0 50%) 0 0 / 2px 2px;
}
.tb--drop { width: 18px; }
.tb--drop svg { width: 10px; }
.sep { flex: none; width: 1px; height: 19px; margin: 2px 2px 0; background: #a0a0a0; }
.gc { fill: none; stroke: #0b8a0b; stroke-width: 1.3px; }
.al { fill: #ececec; stroke: #8a8a8a; }
.g-fx { font: italic bold 12px "Liberation Serif", serif; }
.g-let { font: bold 11px "Liberation Serif", serif; text-anchor: middle; }
.g-let--s { font-size: 9px; font-style: italic; }

.plot {
  flex: 1;
  border: solid #6d6d6d;
  border-width: 2px 0 0 2px;
  background: #fff;
}
.plot__svg { width: 100%; height: auto; }
.grid { fill: none; stroke: #808080; shape-rendering: crispEdges; }
.grid__dash { stroke-dasharray: 4 3; }
.trace { fill: none; shape-rendering: crispEdges; }
.trace--blue { stroke: #00f; }
.trace--red { stroke: #f00; }
.trace__fill { fill: #f00; }
.lbl { font-size: 10px; fill: #00f; }
.mid { text-anchor: middle; }
.end { text-anchor: end; }
.under { text-decoration: underline; }
.red { fill: #f00; }
.navy { fill: #000080; }
.callout { stroke: #000080; shape-rendering: crispEdges; }

.wire { fill: none; stroke: #008000; shape-rendering: crispEdges; }
.part { fill: none; stroke: #00f; shape-rendering: crispEdges; }
.dots { stroke: #f00; stroke-width: 6px; stroke-linecap: round; }
.note { font-size: 9px; fill: #008000; }
.maroon { fill: #800000; }

.tabs {
  display: flex;
  height: 17px;
  background: #f0f0f0;
}
.tabs--analysis { border-left: 2px solid #6d6d6d; border-bottom: 1px solid #fff; height: 18px; }
.nub { flex: none; width: 5px; border: 1px solid; border-color: #fff #777 #888 #fff; }
.nav {
  display: flex;
  align-items: center;
  justify-content: center;
  flex: none;
  width: 16px;
  height: 16px;
  border: 1px solid #696969;
  box-shadow: inset 1px 1px 0 #fff, inset -1px -1px 0 #a0a0a0;
  background: #f0f0f0;
}
.nav svg, .sb svg { width: 10px; height: 10px; }
.edge { flex: none; width: 8px; height: 17px; }
.edge path { fill: none; stroke: #000; }
.edge .edge__w { fill: #fff; stroke: none; }
.tab {
  flex: none;
  height: 16px;
  padding: 0 2px;
  font: 11px/14px Roboto, sans-serif;
  border-top: 1px solid #000;
  border-bottom: 1px solid #a0a0a0;
}
.tab--on { padding: 0 1px; background: #fff; border-top-color: #fff; font-size: 12px; font-weight: 700; }
.tab--last { padding: 0 1px 0 6px; white-space: nowrap; }
.tabs--analysis .nub { width: 7px; }
.fillbar { flex: 1; border-top: 1px solid #000; }
.grip { width: 17px; height: 8px; margin-right: 2px; border: solid #888; border-width: 0 1px 2px 0; }

.doc { display: flex; flex: 1; min-height: 0; }
.doc__main {
  display: grid;
  flex: 1;
  min-width: 0;
  grid-template-columns: minmax(0, 1fr) 16px;
  grid-template-rows: 1fr 17px;
  border: solid #808080;
  border-width: 2px 0 0 2px;
  background: #fff;
}
.sheet { min-width: 0; }
.vbar { display: flex; flex-direction: column; }
.split { height: 6px; background: #f0f0f0; border-bottom: 2px solid #696969; }
.sb {
  display: flex;
  align-items: center;
  justify-content: center;
  flex: none;
  width: 16px;
  height: 16px;
  background: #f0f0f0;
  border: 1px solid;
  border-color: #e3e3e3 #696969 #696969 #e3e3e3;
  box-shadow: inset 1px 1px 0 #fff, inset -1px -1px 0 #a0a0a0;
}
.thumb {
  flex: none;
  background: #f0f0f0;
  border: 1px solid;
  border-color: #e3e3e3 #696969 #696969 #e3e3e3;
  box-shadow: inset 1px 1px 0 #fff, inset -1px -1px 0 #a0a0a0;
}
.thumb--v { height: 160px; }
.thumb--h { width: 86px; height: 16px; }
.trough { flex: 1; background: repeating-conic-gradient(#fff 0 25%, #ececec 0 50%) 0 0 / 2px 2px; }
.trough--lead { flex: none; width: 20px; }
.nub--split { border-color: #000 #777 #777 #000; }
.corner { background: #f0f0f0; }
.side { width: 8px; background: #f0f0f0; border-left: 1px solid #e0e0e0; }
.side__svg { width: 100%; height: auto; }
```
